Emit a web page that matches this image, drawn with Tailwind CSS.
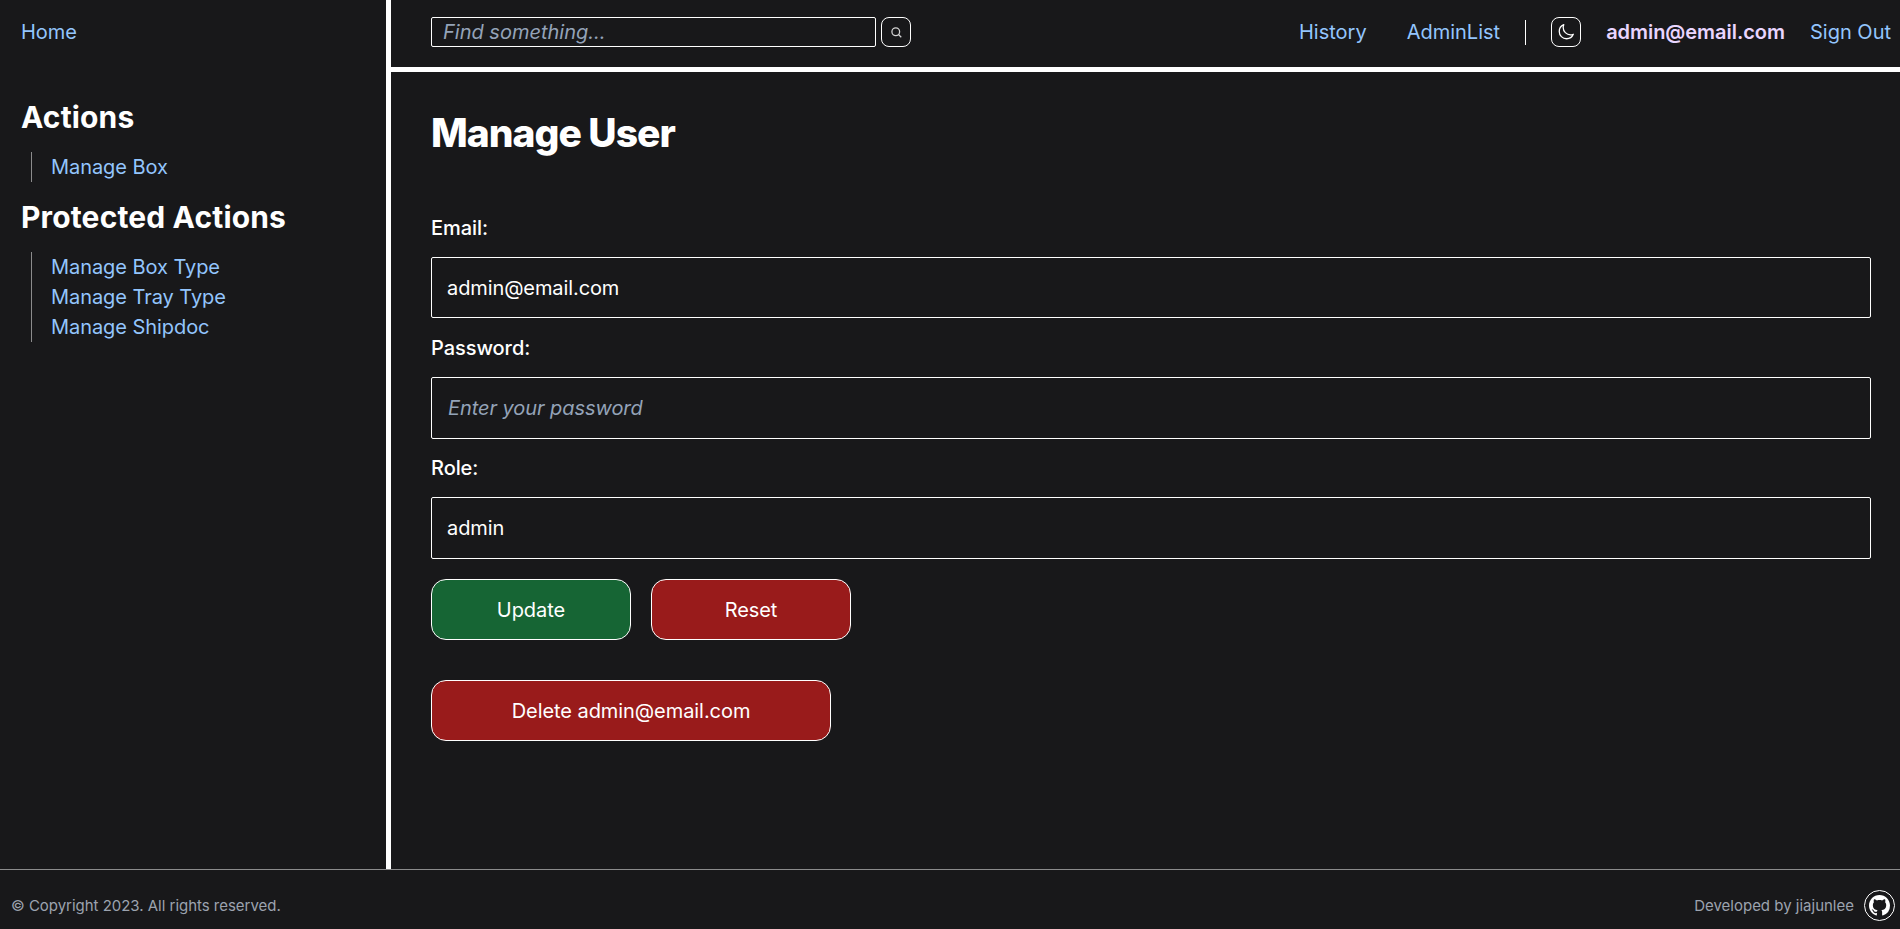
<!DOCTYPE html>
<html lang="en">
<head>
<meta charset="utf-8">
<title>Manage User</title>
<script src="https://cdn.jsdelivr.net/npm/@tailwindcss/browser@4"></script>
</head>
<body class="flex h-[929px] w-[1900px] flex-col overflow-hidden bg-[#18181a] font-['Inter',sans-serif] text-[20px] leading-[30px] tracking-[-0.06px] text-white">
  <div class="flex h-[869px]">
    <aside class="w-[391px] shrink-0 border-r-[5px] border-white pt-[17px] pl-[21px]">
      <a class="block text-[#93c5fd]">Home</a>
      <h2 class="mt-[50px] text-[30px] leading-[40px] font-bold tracking-[0.15px]">Actions</h2>
      <ul class="mt-[15px] ml-[10px] border-l border-[#8b8b8c] pl-[19px] text-[#93c5fd]">
        <li>Manage Box</li>
      </ul>
      <h2 class="mt-[15px] text-[30px] leading-[40px] font-bold tracking-[0.15px]">Protected Actions</h2>
      <ul class="mt-[15px] ml-[10px] border-l border-[#8b8b8c] pl-[19px] text-[#93c5fd]">
        <li>Manage Box Type</li>
        <li>Manage Tray Type</li>
        <li>Manage Shipdoc</li>
      </ul>
    </aside>
    <div class="flex-1">
      <header class="flex h-[72px] items-start border-b-[5px] border-white pt-[17px] pr-[9px] pl-[40px]">
        <input class="h-[30px] w-[445px] rounded-[2px] border border-white px-[11px] tracking-normal placeholder:text-[#94a3b8] placeholder:italic" placeholder="Find something...">
        <button class="ml-[5px] flex size-[30px] items-center justify-center rounded-[8px] border border-white">
          <svg class="size-[11px]" viewBox="0 0 12 12" fill="none" stroke="#d4d4d4" stroke-width="1.4"><circle cx="5.2" cy="5.2" r="4.2"/><path d="M8.2 8.2 11.2 11.2"/></svg>
        </button>
        <nav class="ml-auto flex items-center tracking-normal text-[#93c5fd]">
          <a>History</a>
          <a class="ml-[40px]">AdminList</a>
          <span class="ml-[25px] h-[25px] w-px bg-white"></span>
          <button class="ml-[25px] flex size-[30px] items-center justify-center rounded-[8px] border border-white">
            <svg class="size-[18px]" viewBox="0 0 24 24" fill="none" stroke="#fff" stroke-width="1.7" stroke-linecap="round" stroke-linejoin="round"><path d="M21.752 15.002A9.718 9.718 0 0 1 18 15.75c-5.385 0-9.75-4.365-9.75-9.75 0-1.33.266-2.597.748-3.752A9.753 9.753 0 0 0 3 11.25C3 16.635 7.365 21 12.75 21a9.753 9.753 0 0 0 9.002-5.998Z"/></svg>
          </button>
          <span class="ml-[25px] font-semibold tracking-[-0.04px] text-[#e9d5ff]">admin@email.com</span>
          <a class="ml-[25px]">Sign Out</a>
        </nav>
      </header>
      <main class="pt-[38px] pr-[29px] pl-[40px]">
        <h1 class="text-[39px] leading-[45px] font-extrabold tracking-[-1px]">Manage User</h1>
        <form class="mt-[58px]">
          <label class="block font-medium">Email:</label>
          <input class="mt-[14px] block h-[61px] w-full rounded-[2px] border border-white px-[15px] tracking-[-0.1px]" value="admin@email.com">
          <label class="mt-[15px] block font-medium">Password:</label>
          <input class="mt-[14px] block h-[62px] w-full rounded-[2px] border border-white px-[16px] placeholder:text-[#94a3b8] placeholder:italic" placeholder="Enter your password">
          <label class="mt-[14px] block font-medium">Role:</label>
          <input class="mt-[14px] block h-[62px] w-full rounded-[2px] border border-white px-[15px] tracking-[-0.1px]" value="admin">
          <div class="mt-[20px] flex gap-[20px]">
            <button type="button" class="h-[61px] w-[200px] rounded-[15px] border border-white bg-[#166534]">Update</button>
            <button type="button" class="h-[61px] w-[200px] rounded-[15px] border border-white bg-[#991b1b]">Reset</button>
          </div>
          <button type="button" class="mt-[40px] block h-[61px] w-[400px] rounded-[15px] border border-white bg-[#991b1b]">Delete admin@email.com</button>
        </form>
      </main>
    </div>
  </div>
  <footer class="flex h-[60px] items-center justify-between border-t border-[#8b8b8c] pt-[12px] pr-[5px] pl-[11px] text-[15px] leading-[20px] text-[#9ca3af]">
    <span class="tracking-[-0.02px]">© Copyright 2023. All rights reserved.</span>
    <span class="flex items-center tracking-normal">Developed by jiajunlee
      <span class="ml-[10px] flex size-[31px] items-center justify-center rounded-full border border-white">
        <svg class="size-[21px]" viewBox="0 0 16 16" fill="#fff"><path d="M8 0C3.58 0 0 3.58 0 8c0 3.54 2.29 6.53 5.47 7.59.4.07.55-.17.55-.38 0-.19-.01-.82-.01-1.49-2.01.37-2.53-.49-2.69-.94-.09-.23-.48-.94-.82-1.13-.28-.15-.68-.52-.01-.53.63-.01 1.08.58 1.23.82.72 1.21 1.87.87 2.33.66.07-.52.28-.87.51-1.07-1.78-.2-3.64-.89-3.64-3.95 0-.87.31-1.59.82-2.15-.08-.2-.36-1.02.08-2.12 0 0 .67-.21 2.2.82.64-.18 1.32-.27 2-.27s1.36.09 2 .27c1.53-1.04 2.2-.82 2.2-.82.44 1.1.16 1.92.08 2.12.51.56.82 1.27.82 2.15 0 3.07-1.87 3.75-3.65 3.95.29.25.54.73.54 1.48 0 1.07-.01 1.93-.01 2.2 0 .21.15.46.55.38A8.01 8.01 0 0 0 16 8c0-4.42-3.58-8-8-8Z"/></svg>
      </span>
    </span>
  </footer>
</body>
</html>
